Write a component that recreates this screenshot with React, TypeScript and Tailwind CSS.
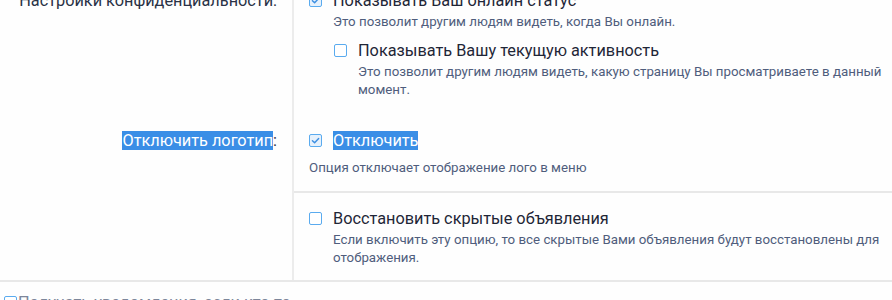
import React from 'react';

// Small checkbox matching the light-blue outline style in the settings form
function Check({ checked = false, className = '' }: { checked?: boolean; className?: string }) {
  return (
    <span
      className={`mt-[3px] flex h-[13px] w-[13px] shrink-0 items-center justify-center rounded-[2px] border-[1.5px] border-[#5aabef] ${
        checked ? 'bg-[#e6f1fc]' : 'bg-white'
      } ${className}`}
    >
      {checked && (
        <svg width="9" height="9" viewBox="0 0 10 10" fill="none">
          <path d="M1.6 5.2 L4 7.5 L8.5 2.7" stroke="#3d8fe2" strokeWidth="1.6" strokeLinecap="round" strokeLinejoin="round" />
        </svg>
      )}
    </span>
  );
}

function Desc({ children, className = '' }: { children: React.ReactNode; className?: string }) {
  return <p className={`text-[13.3px] leading-[18px] text-[#4f5d7c] ${className}`}>{children}</p>;
}

function Option({
  label,
  desc,
  checked,
  children,
}: {
  label: React.ReactNode;
  desc?: string;
  checked?: boolean;
  children?: React.ReactNode;
}) {
  return (
    <div className="flex items-start gap-[11px]">
      <Check checked={checked} />
      <div className="flex flex-col">
        <span className="text-[16.3px] leading-[20px] text-[#1f2637]">{label}</span>
        {desc && <Desc className="mt-[2px]">{desc}</Desc>}
        {children}
      </div>
    </div>
  );
}

export default function App() {
  return (
    <div
      className="h-[300px] w-[892px] overflow-hidden bg-[#fefefe]"
      style={{ fontFamily: 'Roboto, "Noto Sans", sans-serif' }}
    >
      <div className="-mt-[9px] flex flex-col">
        {/* Privacy */}
        <div className="grid grid-cols-[292px_1fr]">
          <div className="pr-[15px] text-right text-[16.3px] leading-[20px] text-[#2a3246]">
            Настройки конфиденциальности:
          </div>
          <div className="border-l-2 border-[#ececec] pl-[15px] pb-[32px]">
            <Option
              checked
              label="Показывать Ваш онлайн статус"
              desc="Это позволит другим людям видеть, когда Вы онлайн."
            >
              <div className="mt-[10px] pl-[1px]">
                <Option
                  label="Показывать Вашу текущую активность"
                  desc="Это позволит другим людям видеть, какую страницу Вы просматриваете в данный момент."
                />
              </div>
            </Option>
          </div>
        </div>

        {/* Logo */}
        <div className="grid grid-cols-[292px_1fr]">
          <div className="pr-[15px] text-right text-[16.3px] leading-[20px] text-[#2a3246]">
            <span className="bg-[#3a8ee6] text-white">Отключить логотип</span>:
          </div>
          <div className="border-l-2 border-[#ececec]">
            <div className="border-b-2 border-[#e8e8e8] pl-[15px] pb-[14px]">
              <div className="flex items-start gap-[11px]">
                <Check checked />
                <span className="text-[16.3px] leading-[20px] text-[#1f2637]">
                  <span className="bg-[#3a8ee6] text-white">Отключить</span>
                </span>
              </div>
              <Desc className="mt-[8px]">Опция отключает отображение лого в меню</Desc>
            </div>
          </div>
        </div>

        {/* Restore hidden ads */}
        <div className="grid grid-cols-[292px_1fr] border-b-2 border-[#e8e8e8]">
          <div />
          <div className="border-l-2 border-[#ececec] pl-[15px] pt-[16px] pb-[13px]">
            <Option
              label="Восстановить скрытые объявления"
              desc="Если включить эту опцию, то все скрытые Вами объявления будут восстановлены для отображения."
            />
          </div>
        </div>

        {/* Notifications (cut off at the bottom edge) */}
        <div className="flex items-start gap-[1px] pl-[4px] pt-[11px]">
          <Check className="mt-[2px]" />
          <span className="text-[16.3px] leading-[20px] text-[#7d869a]">Получать уведомления, если кто-то</span>
        </div>
      </div>
    </div>
  );
}
